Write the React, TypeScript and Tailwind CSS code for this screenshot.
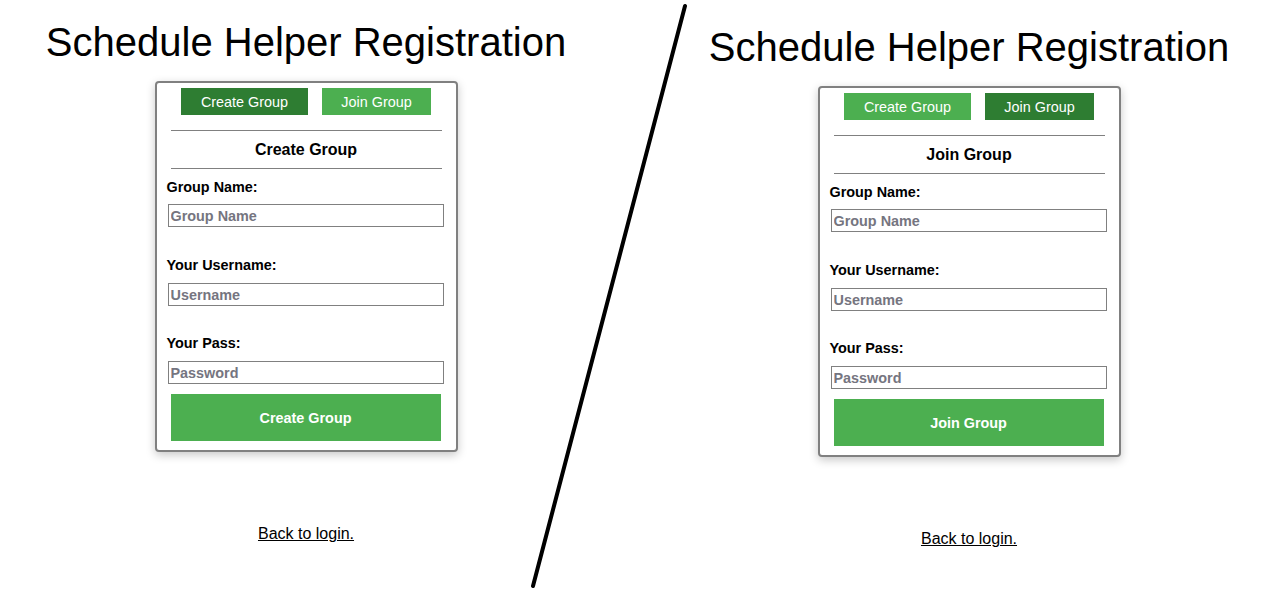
import React from "react";

const font = { fontFamily: '"Liberation Sans", Arial, sans-serif' };

function Panel({ mode }: { mode: "create" | "join" }) {
  const isCreate = mode === "create";
  const title = isCreate ? "Create Group" : "Join Group";
  return (
    <div className="w-[612px] flex flex-col items-center pt-[19px]">
      <h1 className="text-[40px] leading-[46px] font-normal text-black m-0">
        Schedule Helper Registration
      </h1>
      <div className="mt-[16px] w-[303px] border-2 border-[#808080] rounded-[4px] bg-white shadow-[0_3px_10px_rgba(0,0,0,0.22)] pt-[5px] pb-[9px] flex flex-col">
        <div className="flex justify-center gap-[14px]">
          <button
            className={`w-[127px] h-[27px] pt-[2px] text-[14.4px] text-white ${
              isCreate ? "bg-[#2e7d32]" : "bg-[#4caf50]"
            }`}
          >
            Create Group
          </button>
          <button
            className={`w-[109px] h-[27px] pt-[2px] text-[14.4px] text-white ${
              isCreate ? "bg-[#4caf50]" : "bg-[#2e7d32]"
            }`}
          >
            Join Group
          </button>
        </div>
        <div className="mt-[15px] mx-[14px] h-px bg-[#808080]" />
        <div className="mt-[10px] mb-[9px] text-center text-[16px] leading-[18px] font-bold text-black">
          {title}
        </div>
        <div className="mx-[14px] h-px bg-[#808080]" />
        <label className="mt-[10px] ml-[10px] text-[14.4px] leading-[17px] font-bold text-black">
          Group Name:
        </label>
        <input
          placeholder="Group Name"
          className="mt-[8px] ml-[11px] w-[276px] h-[23px] border border-[#808080] pl-[2px] text-[14.4px] font-bold placeholder:text-[#757580] outline-none"
        />
        <label className="mt-[30px] ml-[10px] text-[14.4px] leading-[17px] font-bold text-black">
          Your Username:
        </label>
        <input
          placeholder="Username"
          className="mt-[9px] ml-[11px] w-[276px] h-[23px] border border-[#808080] pl-[2px] text-[14.4px] font-bold placeholder:text-[#757580] outline-none"
        />
        <label className="mt-[29px] ml-[10px] text-[14.4px] leading-[17px] font-bold text-black">
          Your Pass:
        </label>
        <input
          placeholder="Password"
          type="password"
          className="mt-[9px] ml-[11px] w-[276px] h-[23px] border border-[#808080] pl-[2px] text-[14.4px] font-bold placeholder:text-[#757580] outline-none"
        />
        <button className="mt-[10px] mx-[14px] w-[270px] h-[47px] pt-[2px] bg-[#4caf50] text-white text-[14.4px] font-bold">
          {title}
        </button>
      </div>
      <a className="mt-[73px] text-[16px] leading-[18px] text-black underline cursor-pointer">
        Back to login.
      </a>
    </div>
  );
}

export default function App() {
  return (
    <div className="relative w-[1275px] h-[603px] overflow-hidden bg-white" style={font}>
      <div className="flex gap-[51px]">
        <Panel mode="create" />
        <div className="pt-[5px]">
          <Panel mode="join" />
        </div>
      </div>
      <svg
        className="absolute left-0 top-0 pointer-events-none"
        width="1275"
        height="603"
        viewBox="0 0 1275 603"
      >
        <line x1="685" y1="6" x2="533" y2="586" stroke="#000" strokeWidth="4" strokeLinecap="round" />
      </svg>
    </div>
  );
}
